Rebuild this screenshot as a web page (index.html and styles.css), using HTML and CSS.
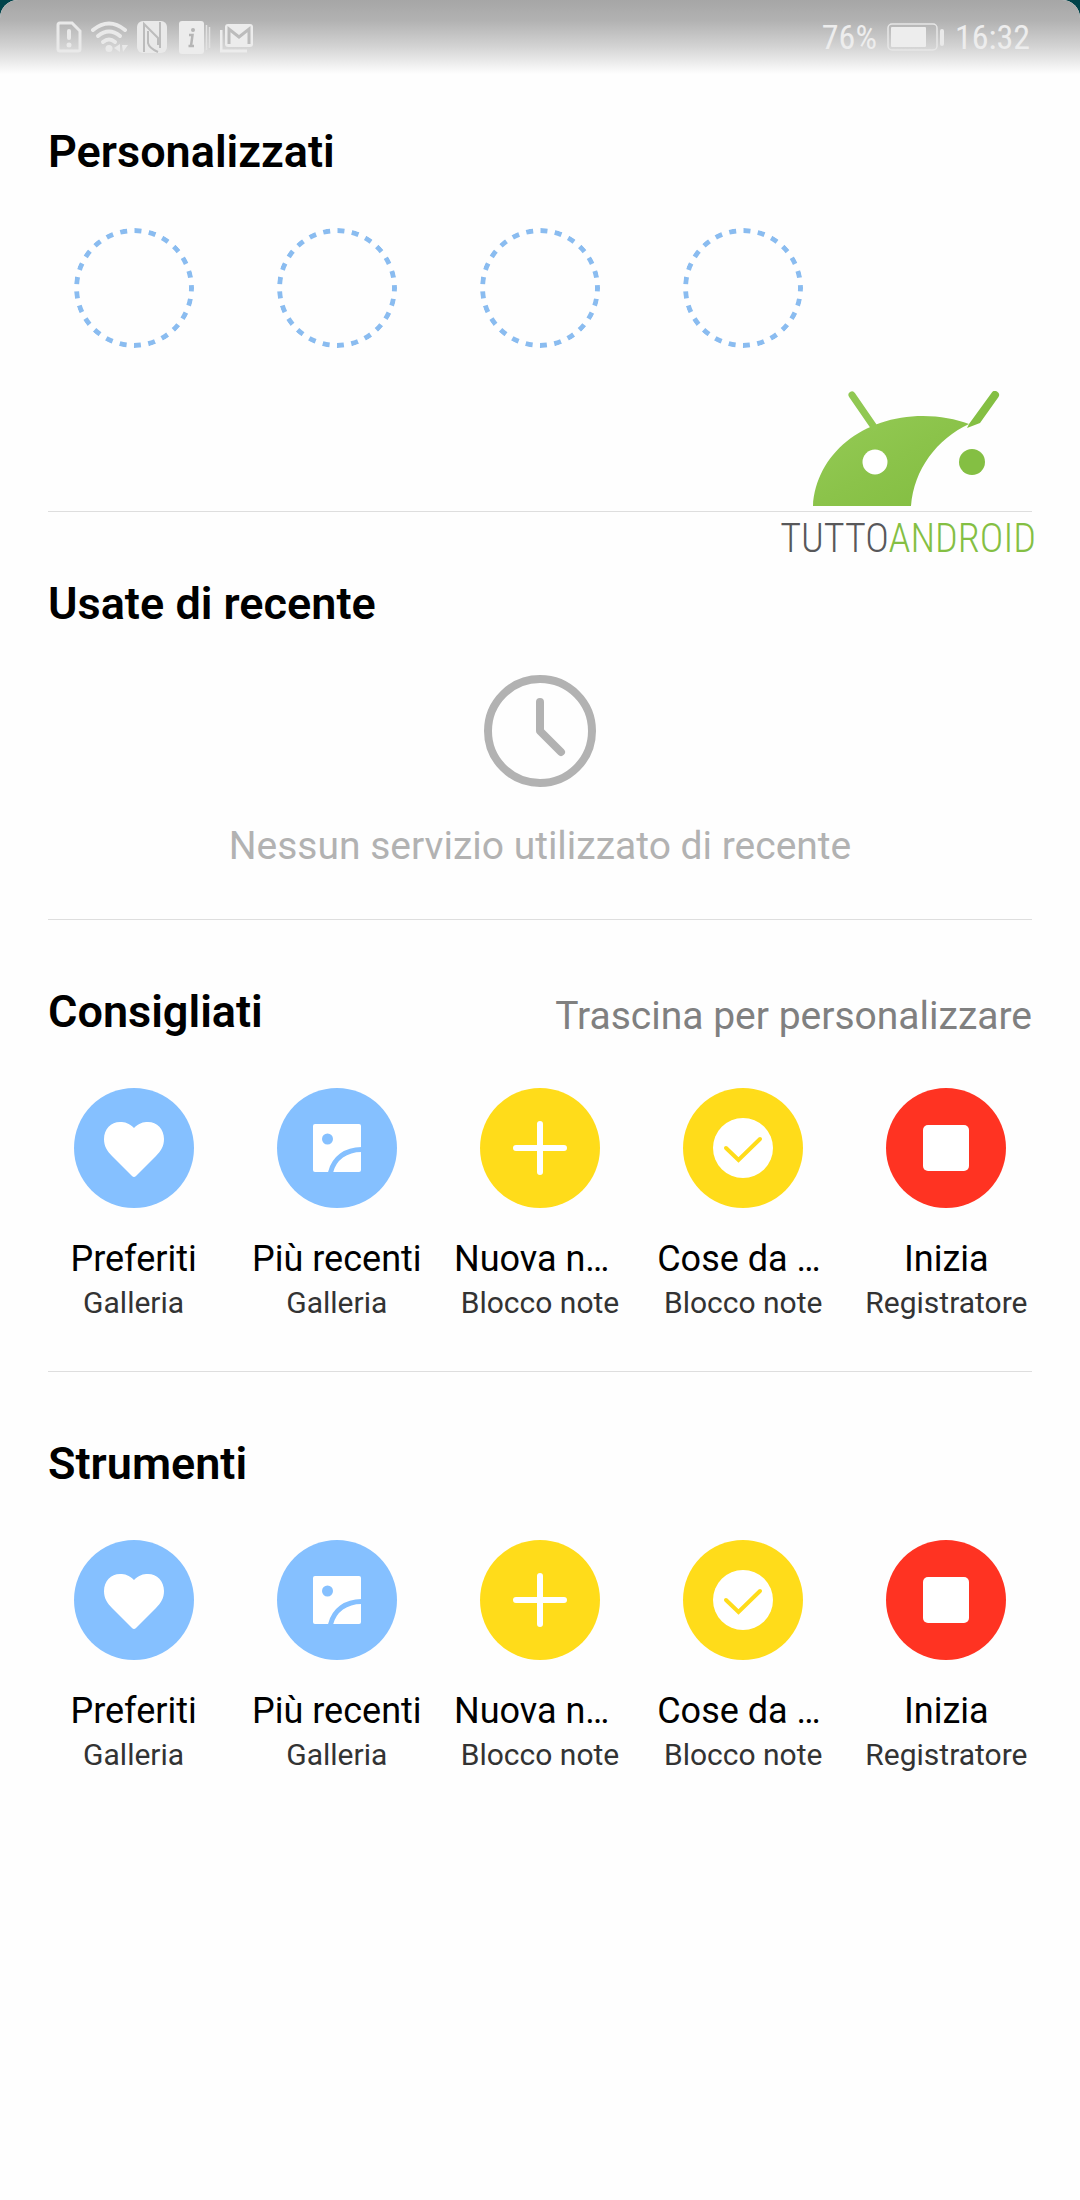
FILE: index.html
```html
<!DOCTYPE html>
<html lang="it">
<head>
    <meta charset="UTF-8">
    <meta name="viewport" content="width=device-width, initial-scale=1.0">
    <title>Servizi</title>
    <link rel="stylesheet" href="styles.css">
</head>
<body>
    <!-- shared icons -->
    <svg class="icon-defs" aria-hidden="true">
        <symbol id="icon-heart" viewBox="0 0 120 120">
            <path fill="#fff" d="M60 40 C55 35 51 34 46 34 C37 34 30 41 30 51 C30 58 33 63 38 68 L58 88 Q60 90 62 88 L82 68 C87 63 90 58 90 51 C90 41 83 34 74 34 C69 34 65 35 60 40 Z"/>
        </symbol>
        <symbol id="icon-photo" viewBox="0 0 120 120">
            <rect x="36" y="36" width="48" height="48" rx="2" fill="#fff"/>
            <circle cx="50.500" cy="51" r="5.500" fill="#85c0ff"/>
            <path d="M53.500 84.500 C57 70 69 61.500 84.500 61.500" fill="none" stroke="#85c0ff" stroke-width="5"/>
        </symbol>
        <symbol id="icon-plus" viewBox="0 0 120 120">
            <path d="M60 36 V84 M36 60 H84" fill="none" stroke="#fff" stroke-width="6" stroke-linecap="round"/>
        </symbol>
        <symbol id="icon-check" viewBox="0 0 120 120">
            <circle cx="60" cy="60" r="30" fill="#fff"/>
            <path d="M43 60 L55.500 72 L77 51" fill="none" stroke="#ffdc1a" stroke-width="4" stroke-linecap="round"/>
        </symbol>
        <symbol id="icon-stop" viewBox="0 0 120 120">
            <rect x="37" y="37" width="46" height="46" rx="5" fill="#fff"/>
        </symbol>
        <symbol id="icon-slot" viewBox="0 0 120 120">
            <circle cx="60" cy="60" r="57.500" fill="none" stroke="#8abcf0" stroke-width="5" stroke-dasharray="7 7.450" stroke-dashoffset="3.500"/>
        </symbol>
    </svg>

    <div class="screen">
        <header class="status-bar">
            <div class="status-icons">
                <svg width="26" height="32" viewBox="0 0 26 32">
                    <path d="M4 2 H16 L24 10 V28 Q24 30 22 30 H4 Q2 30 2 28 V4 Q2 2 4 2 Z" fill="none" stroke="#e9e9e9" stroke-width="3"/>
                    <path d="M13 10 V17" stroke="#e9e9e9" stroke-width="4" stroke-linecap="round"/>
                    <circle cx="13" cy="24" r="2.500" fill="#e9e9e9"/>
                </svg>
                <svg width="38" height="32" viewBox="0 0 38 32">
                    <g fill="none" stroke="#e9e9e9" stroke-width="4" stroke-linecap="round">
                        <path d="M3 9 Q19 -4 35 9"/>
                        <path d="M8 15 Q19 6 30 15"/>
                        <path d="M13 21 Q19 16 25 21"/>
                    </g>
                    <circle cx="19" cy="27.500" r="3.500" fill="#e9e9e9"/>
                    <path d="M30 23 V31 L24 27 Z M32 24 H38 L33 31 Z" fill="#e9e9e9"/>
                </svg>
                <svg width="34" height="32" viewBox="0 0 34 32">
                    <rect x="1" y="0" width="30" height="32" rx="6" fill="#e9e9e9"/>
                    <path d="M8 31 V3 L22 17 V24 M12 10 V22 Q13 27 22 31 M24 1 V27" fill="none" stroke="#bcbcbc" stroke-width="2"/>
                </svg>
                <svg width="34" height="34" viewBox="0 0 34 34">
                    <rect x="1" y="1" width="25" height="33" rx="3" fill="#ececec"/>
                    <path d="M28.500 5 V30 M31.500 7 V28" stroke="#e2e2e2" stroke-width="1.500"/>
                    <circle cx="15" cy="10" r="2" fill="#b5b5b5"/>
                    <path d="M11 15 H14.500 L13 26 H16 M10.500 26 H13" fill="none" stroke="#b5b5b5" stroke-width="2.500"/>
                </svg>
                <svg width="34" height="32" viewBox="0 0 34 32">
                    <rect x="5" y="3" width="28" height="23" rx="3" fill="#ececec"/>
                    <path d="M9 23 V8 L19 16 L29 8 V23" fill="none" stroke="#bcbcbc" stroke-width="3"/>
                    <path d="M1 9 V30 H27" fill="none" stroke="#ececec" stroke-width="3"/>
                </svg>
            </div>
            <div class="status-info">
                <span>76%</span>
                <svg width="58" height="28" viewBox="0 0 58 28">
                    <rect x="1" y="1" width="49" height="26" rx="4" fill="none" stroke="#e6e6e6" stroke-width="1.500"/>
                    <rect x="4" y="4" width="35" height="20" rx="1" fill="#ededed"/>
                    <rect x="53" y="6" width="4" height="17" rx="2" fill="#e9e9e9"/>
                </svg>
                <span>16:32</span>
            </div>
        </header>

        <main>
            <section class="section section-custom">
                <div class="section-header">
                    <h2>Personalizzati</h2>
                </div>
                <div class="services">
                    <div class="service"><svg class="slot"><use href="#icon-slot"/></svg></div>
                    <div class="service"><svg class="slot"><use href="#icon-slot"/></svg></div>
                    <div class="service"><svg class="slot"><use href="#icon-slot"/></svg></div>
                    <div class="service"><svg class="slot"><use href="#icon-slot"/></svg></div>
                </div>
                <div class="watermark">
                    <svg width="190" height="116" viewBox="0 0 190 116">
                        <defs>
                            <linearGradient id="leaf" x1="0" y1="0" x2="1" y2="1">
                                <stop offset="0" stop-color="#95cb56"/>
                                <stop offset="0.500" stop-color="#8bc34a"/>
                                <stop offset="1" stop-color="#82bd40"/>
                            </linearGradient>
                        </defs>
                        <path d="M0 115 C3 63 50 25 110 25 C127 25 143 28 156 33 C124 48 101 78 98 115 Z" fill="url(#leaf)"/>
                        <path d="M39 4 L61 36" stroke="#90c852" stroke-width="7" stroke-linecap="round"/>
                        <path d="M178.500 2 A4 4 0 0 1 185.500 6 L167 32 L154 37 L156 33 Z" fill="#84bf43"/>
                        <circle cx="62" cy="71" r="12.500" fill="#fff"/>
                        <circle cx="159" cy="71" r="13" fill="#84bf43"/>
                    </svg>
                    <p class="wordmark">TUTTO<span>ANDROID</span></p>
                </div>
            </section>

            <section class="section">
                <div class="section-header">
                    <h2>Usate di recente</h2>
                </div>
                <div class="empty">
                    <svg width="112" height="112" viewBox="0 0 112 112">
                        <g fill="none" stroke="#b2b2b2" stroke-width="8" stroke-linecap="round" stroke-linejoin="round">
                            <circle cx="56" cy="56" r="52"/>
                            <path d="M56 27 V56 L77 77"/>
                        </g>
                    </svg>
                    <p>Nessun servizio utilizzato di recente</p>
                </div>
            </section>

            <section class="section">
                <div class="section-header">
                    <h2>Consigliati</h2>
                    <p class="hint">Trascina per personalizzare</p>
                </div>
                <div class="services">
                    <button class="service" type="button">
                        <svg class="badge blue"><use href="#icon-heart"/></svg>
                        <span class="name">Preferiti</span>
                        <span class="app">Galleria</span>
                    </button>
                    <button class="service" type="button">
                        <svg class="badge blue"><use href="#icon-photo"/></svg>
                        <span class="name">Più recenti</span>
                        <span class="app">Galleria</span>
                    </button>
                    <button class="service" type="button">
                        <svg class="badge yellow"><use href="#icon-plus"/></svg>
                        <span class="name cut">Nuova n…</span>
                        <span class="app">Blocco note</span>
                    </button>
                    <button class="service" type="button">
                        <svg class="badge yellow"><use href="#icon-check"/></svg>
                        <span class="name cut">Cose da …</span>
                        <span class="app">Blocco note</span>
                    </button>
                    <button class="service" type="button">
                        <svg class="badge red"><use href="#icon-stop"/></svg>
                        <span class="name">Inizia</span>
                        <span class="app">Registratore</span>
                    </button>
                </div>
            </section>

            <section class="section">
                <div class="section-header">
                    <h2>Strumenti</h2>
                </div>
                <div class="services">
                    <button class="service" type="button">
                        <svg class="badge blue"><use href="#icon-heart"/></svg>
                        <span class="name">Preferiti</span>
                        <span class="app">Galleria</span>
                    </button>
                    <button class="service" type="button">
                        <svg class="badge blue"><use href="#icon-photo"/></svg>
                        <span class="name">Più recenti</span>
                        <span class="app">Galleria</span>
                    </button>
                    <button class="service" type="button">
                        <svg class="badge yellow"><use href="#icon-plus"/></svg>
                        <span class="name cut">Nuova n…</span>
                        <span class="app">Blocco note</span>
                    </button>
                    <button class="service" type="button">
                        <svg class="badge yellow"><use href="#icon-check"/></svg>
                        <span class="name cut">Cose da …</span>
                        <span class="app">Blocco note</span>
                    </button>
                    <button class="service" type="button">
                        <svg class="badge red"><use href="#icon-stop"/></svg>
                        <span class="name">Inizia</span>
                        <span class="app">Registratore</span>
                    </button>
                </div>
            </section>
        </main>
    </div>
</body>
</html>
```

FILE: styles.css
```css
* {
    box-sizing: border-box;
}
body {
    margin: 0;
    background: #00434a;
    font-family: Roboto, "Liberation Sans", sans-serif;
    color: #000;
}
h2, p {
    margin: 0;
}
.icon-defs {
    display: none;
}
.screen {
    min-height: 100vh;
    background: #fefefe;
    border-radius: 18px 18px 0 0;
    overflow: hidden;
}

/* status bar */
.status-bar {
    display: flex;
    justify-content: space-between;
    align-items: center;
    height: 74px;
    padding: 0 50px 0 56px;
    background: linear-gradient(#a6a6a6, #b2b2b2 28%, #d2d2d2 62%, #fefefe);
}
.status-icons {
    display: flex;
    align-items: center;
    gap: 8px;
}
.status-info {
    display: flex;
    align-items: center;
    gap: 10px;
    font-family: "Roboto Condensed", "Liberation Sans Narrow", Roboto, sans-serif;
    font-size: 34px;
    line-height: 40px;
    color: #ededed;
}

/* sections */
.section {
    padding: 63px 32px 48px;
}
.section-custom {
    position: relative;
    padding-top: 48px;
}
.section + .section {
    position: relative;
}
.section + .section::before {
    content: "";
    position: absolute;
    top: 0;
    left: 48px;
    right: 48px;
    height: 1px;
    background: #dedede;
}
.section-header {
    display: flex;
    justify-content: space-between;
    align-items: flex-end;
    padding: 0 16px;
}
h2 {
    font-size: 45px;
    line-height: 60px;
    font-weight: 600;
}
.hint {
    font-size: 39px;
    line-height: 52px;
    color: #808080;
}

.services {
    display: grid;
    grid-template-columns: repeat(5, 1fr);
    margin-top: 46px;
}
.service {
    display: flex;
    flex-direction: column;
    align-items: center;
    min-height: 235px;
    padding: 0;
    border: none;
    background: none;
    font-family: inherit;
    color: inherit;
}
.slot,
.badge {
    width: 120px;
    height: 120px;
    border-radius: 50%;
}
.blue { background: #85c0ff; }
.yellow { background: #ffdc1a; }
.red { background: #ff3322; }
.name {
    width: 172px;
    margin-top: 27px;
    font-size: 36px;
    line-height: 48px;
    text-align: center;
    white-space: nowrap;
}
.cut {
    text-align: left;
}
.app {
    font-size: 30px;
    line-height: 40px;
    color: #333;
}

.empty {
    display: flex;
    flex-direction: column;
    align-items: center;
    gap: 35px;
    margin-top: 41px;
    font-size: 39px;
    line-height: 49px;
    color: #b2b2b2;
}

/* logo over the first divider */
.watermark {
    position: absolute;
    z-index: 1;
    right: 44px;
    top: 317px;
    display: flex;
    flex-direction: column;
    align-items: center;
}
.wordmark {
    font-family: "Roboto Condensed", "Liberation Sans Narrow", Roboto, sans-serif;
    font-size: 40px;
    line-height: 64px;
    font-weight: 300;
    color: #58585a;
}
.wordmark span {
    color: #84bf43;
}
```
